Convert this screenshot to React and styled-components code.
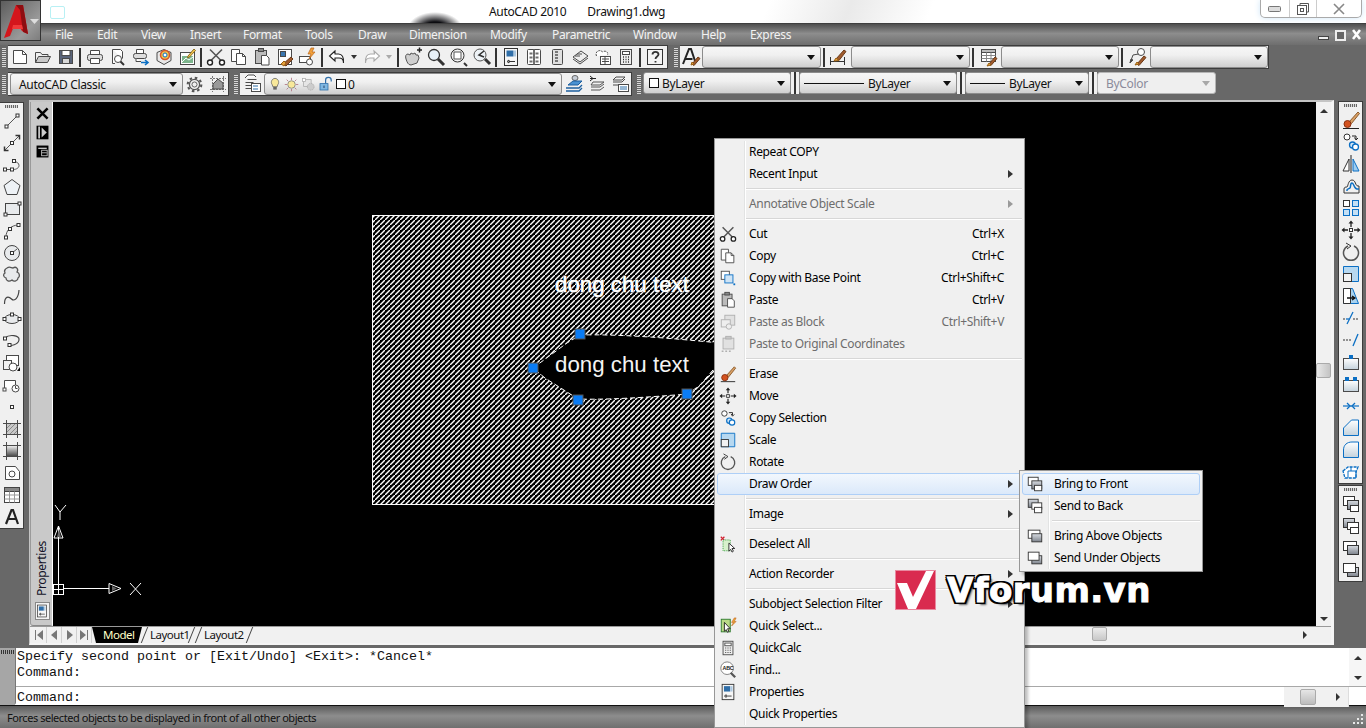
import React from "react"
import styled, { createGlobalStyle } from "styled-components"

const UI = `"Noto Sans", "Open Sans", sans-serif`

const GlobalStyle = createGlobalStyle`
  html, body {
    margin: 0;
    padding: 0;
    overflow: hidden;
    background: #686868;
  }
  * { box-sizing: border-box; }
`

const D = "#4a4a4a"
const B = "#0b6fc4"
const G = "#9a9a9a"

// all icons live in a 20x20 box
const icons = {
  new: <><path d="M3.5 3.5h9l4 4v9h-13z" fill="#fff" /><path d="M12.5 3.5v4h4" /></>,
  open: <><path d="M2.5 15.5v-10h5l1.5 2h6v2" fill="#eee" /><path d="M2.5 15.5l3-6h12l-3 6z" fill="#c9c9c9" /></>,
  save: <><rect x="3.5" y="3.5" width="13" height="13" fill="#59647a" /><rect x="6" y="3.5" width="8" height="5" fill="#fff" /><rect x="6.5" y="11.5" width="7" height="5" fill="#d8d8d8" /></>,
  print: <><path d="M5.5 7V3.5h9V7" fill="#fff" /><rect x="2.5" y="7.5" width="15" height="6" rx="2" fill="#ddd" /><path d="M5.5 11.5h9v5h-9z" fill="#fff" /></>,
  preview: <><path d="M4.5 2.5h8l2 2v7M7 16.5H4.5v-14" fill="#fff" /><circle cx="10" cy="12" r="3.5" fill="#fff" /><path d="M12.5 14.5l3.5 3.5" strokeWidth="2" stroke="#333" /></>,
  plot: <><path d="M5.5 6V2.5h7V6" fill="#fff" /><rect x="2.5" y="6.5" width="13" height="5" rx="2" fill="#ddd" /><path d="M5 11.5v3h5" fill="#fff" /><path d="M10 15.5h6M14 13l3 2.5-3 2.5" stroke={B} strokeWidth="1.6" /></>,
  view3d: <><path d="M10 2.5l7 3v8l-7 4-7-4v-8z" fill="#e8e8e8" /><circle cx="11" cy="8" r="4.5" fill="#f3c24a" stroke="#d4552a" strokeWidth="1.5" /><circle cx="11" cy="8" r="2" fill="#fff" stroke={B} /></>,
  publish: <><rect x="3.5" y="5.5" width="14" height="12" fill="#fff" /><rect x="5" y="9" width="11" height="7" fill="#7db58d" stroke="none" /><path d="M5 15l4-4 3 2 4-3" stroke="#fff" /><path d="M11 9l6-7 1.5 1.5-6 6.5-2 1z" fill="#f5c550" stroke="#8a6d1f" /></>,
  cut: <><path d="M4 2.5l11 11M16 2.5l-11 11" stroke="#555" strokeWidth="1.6" /><circle cx="4" cy="15.5" r="2.5" fill="#fff" stroke="#222" strokeWidth="1.4" /><circle cx="16" cy="15.5" r="2.5" fill="#fff" stroke="#222" strokeWidth="1.4" /></>,
  copy: <><path d="M2.5 2.5h8v12h-8z" fill="#fff" /><path d="M7.5 6.5h6l3 3v8h-9z" fill="#fff" /><path d="M13.5 6.5v3h3" /></>,
  copyBase: <><rect x="2.5" y="2.5" width="9" height="9" fill="#fff" /><rect x="6.5" y="6.5" width="9" height="9" fill="#cfe4f5" stroke={B} /><rect x="16" y="16" width="2" height="2" fill={B} stroke="none" /></>,
  paste: <><rect x="3.5" y="3.5" width="11" height="13" fill="#bbb" /><rect x="6.5" y="1.5" width="5" height="3" fill="#888" /><path d="M9.5 8.5h5l2.5 2.5v7h-7.5z" fill="#fff" /></>,
  pasteBlock: <g stroke={G}><rect x="6.5" y="2.5" width="11" height="11" fill="#ddd" /><rect x="2.5" y="7.5" width="10" height="8" fill="#eee" /><circle cx="11" cy="15" r="3" fill="#eee" /></g>,
  pasteOrig: <g stroke={G}><rect x="4.5" y="3.5" width="12" height="12" fill="#ddd" /><rect x="7.5" y="1.5" width="6" height="3" fill="#bbb" /><path d="M3 18h2M7 18h2M11 18h2" strokeWidth="1.5" /></g>,
  match: <><rect x="3.5" y="2.5" width="13" height="15" fill="#fff" /><rect x="5.5" y="4.5" width="5" height="5" fill="#3c78b0" /><path d="M8 17l8-7 2 2-7 7z" fill="#a05a2c" stroke="#6b3a18" /><path d="M6 17l3-3 2 2-2 3z" fill="#e6a23c" stroke="#9a6014" /></>,
  blockEdit: <><rect x="1.5" y="9.5" width="11" height="6" fill="#fff" /><circle cx="11.5" cy="15" r="3" fill="#fff" /><path d="M13 1l-3 6h3l-2 5 6-7h-3l2-4z" fill="#f2a13a" stroke="#b9641a" strokeWidth=".7" /></>,
  undo: <path d="M8 4L2.5 9 8 14v-3h4c3 0 4.500 2 4.500 5 .5-6-1.500-9-5-9H8z" fill="#fff" stroke="#222" strokeWidth="1.1" />,
  redo: <path d="M12 4l5.500 5-5.500 5v-3H8c-3 0-4.500 2-4.500 5-.5-6 1.500-9 5-9h4z" fill="#fff" stroke="#aaa" strokeWidth="1.1" />,
  pan: <><path d="M3 12c-1-3 0-5 2-5l2 1 1-2 2 1 2-1 1 2 2 0 1 3-2 5-6 2c-3 0-4-3-5-6z" fill="#cfcfcf" stroke="#555" /><path d="M14 3h5M16.500 .5v5" stroke="#222" strokeWidth="1.5" /></>,
  zoom: <><circle cx="8" cy="8" r="5.5" fill="#e8f1f8" stroke="#333" strokeWidth="1.3" /><path d="M12 12l6 6" stroke="#333" strokeWidth="3" /></>,
  zoomWin: <><circle cx="8.500" cy="8.500" r="6.500" fill="#f3f3f3" stroke="#333" /><rect x="5" y="5" width="7" height="7" fill="#fff" stroke="#555" /><path d="M15 16l3 3" stroke="#333" strokeWidth="2" /></>,
  zoomPrev: <><circle cx="8" cy="8" r="6" fill="#eef3f7" stroke="#555" /><path d="M13 12l5 5" stroke="#333" strokeWidth="3" /><path d="M12 4l-5 4 5 2" stroke="#333" strokeWidth="1.6" /></>,
  props: <><rect x="3.5" y="1.5" width="13" height="17" fill="#f6f6f6" stroke="#333" /><rect x="5.500" y="3.500" width="7" height="6" fill="#2f6ea8" stroke="none" /><rect x="13" y="3.500" width="2" height="6" fill="#aac7e0" stroke="none" /><path d="M8 14.500h6M6 14.500l2-1.500v3z" stroke="#333" /></>,
  design: <><rect x="3.500" y="2.500" width="13" height="15" rx="1" fill="#fff" /><path d="M10 2.500v15M5.500 6.500h3M11.500 6.500h3M5.500 10.500h3M11.500 10.500h3M11.500 14.500h3M5.500 14.500h3" strokeWidth="2" stroke="#6e6e6e" /></>,
  palette: <><rect x="5.500" y="2.500" width="10" height="15" rx="1" fill="#e0e0e0" /><path d="M8 5h3M8 8h3M8 11h3M8 14h3" strokeWidth="2" stroke="#777" /></>,
  sheet: <><path d="M3 10l8-6 7 5-8 6z" fill="#eee" /><path d="M3 12l7 5 8-6M5 9h5M7 7h5" /></>,
  markup: <><path d="M3.500 9c-2-5 4-7 6-4 3-2 6 0 5 3" fill="#fff" strokeDasharray="2 1" /><rect x="7.500" y="9.500" width="10" height="8" fill="#fff" /><path d="M9 12h7M9 14.500h7M12 9.500v8" /></>,
  calc: <><rect x="4.500" y="2.500" width="11" height="15" fill="#eee" /><rect x="6.500" y="4.500" width="7" height="3" fill="#fff" /><path d="M7 10h1M9.500 10h1M12 10h1M7 12.500h1M9.500 12.500h1M12 12.500h1M7 15h1M9.500 15h1M12 15h1" stroke="#333" strokeWidth="1.300" /></>,
  help: <><rect x="2.500" y="2.500" width="15" height="15" fill="#f4f4f4" stroke="#333" /><path d="M7.500 7.500c0-3.500 6-3.500 6 0 0 2-3 2-3 4.500M10.500 14v1.500" stroke="#333" strokeWidth="1.800" /></>,
  textStyle: <><path d="M2 17L8 2h2l4 12M4.500 12h7" stroke="#222" strokeWidth="2" /><path d="M11 17l6-7 2 1.500-6 7z" fill="#a05a2c" stroke="#6b3a18" /><path d="M10 18l1-3 2 2z" fill="#e6a23c" stroke="#9a6014" /></>,
  dimStyle: <><path d="M1.500 10v8M15.500 10v8M2 14.500h13" stroke="#333" /><path d="M7 12l8-9 2 1.500-7 9z" fill="#a05a2c" stroke="#6b3a18" /><path d="M5 14l2-3 3 2.500z" fill="#e6a23c" stroke="#9a6014" /></>,
  tableStyle: <><rect x="2.500" y="2.500" width="14" height="12" fill="#fff" /><rect x="2.500" y="2.500" width="14" height="3" fill="#bbb" /><path d="M2.500 8.500h14M2.500 11.500h14M7.500 5.500v9M12 5.500v9" stroke="#888" /><path d="M10 17l6-7 2 1.500-6 7z" fill="#a05a2c" stroke="#6b3a18" /><path d="M8 19l2-3 2 2z" fill="#e6a23c" stroke="#9a6014" /></>,
  mleaderStyle: <><circle cx="13" cy="5" r="3.500" fill="#fff" /><path d="M10.500 7L5 8l-3 8" /><path d="M2 16l1-4 2 1z" fill="#444" /><path d="M9 17l7-8 2 1.500-7 8z" fill="#a05a2c" stroke="#6b3a18" /><path d="M7 18l2-3 2 2z" fill="#e6a23c" stroke="#9a6014" /></>,
  gear: <><circle cx="10" cy="10" r="6" fill="none" stroke="#555" strokeWidth="1.500" /><circle cx="10" cy="10" r="8" fill="none" stroke="#555" strokeWidth="2.500" strokeDasharray="3 3.300" /><circle cx="10" cy="10" r="3" fill="#f0f0f0" /></>,
  workspace: <><path d="M2 4.500h16M2 15.500h16M4.500 2v16M15.500 2v16" stroke="#777" strokeDasharray="2 1" /><path d="M5 10l5-5 5 4v6H5z" fill="#999" /></>,
  layerProps: <><path d="M5.500 5.500h9M3.500 8.500h8M3.500 11.500h8M3.500 14.500h8" /><path d="M3 4l3-3h6l2 2" fill="#fff" /><rect x="9.500" y="9.500" width="9" height="8" fill="#fff" /><path d="M11 12h5M11 15h5" stroke="#2d6fa8" /></>,
  bulb: <><path d="M6 11c-3-4 0-9 4-9s7 5 4 9l-1 3H7z" fill="#f8e89a" stroke="#555" /><rect x="7.500" y="14" width="5" height="4" fill="#666" stroke="none" /></>,
  sun: <><circle cx="10" cy="10" r="5" fill="#f8e89a" stroke="#777" /><path d="M10 1v3M10 16v3M1 10h3M16 10h3M3.500 3.500l2 2M14.500 14.500l2 2M16.500 3.500l-2 2M3.500 16.500l2-2" stroke="#a67" /></>,
  freeze: <g stroke="#aaa"><rect x="3.500" y="3.500" width="10" height="9" fill="#e6e6e6" /><rect x="2" y="2" width="4" height="4" fill="#fff" /><circle cx="13" cy="13" r="4.500" fill="#ccc" strokeDasharray="2 1" /></g>,
  lock: <><rect x="2.500" y="9.500" width="10" height="8" fill="#7fb7e2" stroke="#2f6ea8" /><path d="M9.500 9V5c0-4.500 7-4.500 7 0v2" stroke="#2f6ea8" strokeWidth="1.500" /><path d="M7.500 12v3" stroke="#124" /></>,
  layerCur: <><ellipse cx="11" cy="4" rx="3" ry="2.500" fill="#c5ccd6" stroke="#666" /><path d="M4 11l5-4h9l-4 4z" fill="#4a92d2" stroke="#1d5f9e" /><path d="M2 14h13l3-3M2 17h13l3-3" stroke="#1d5f9e" strokeWidth="1.300" /></>,
  layerPrev: <><path d="M3 2l3 2.500L3 7M3 4.500h6" stroke="#222" /><path d="M6 8h11l-4 3H4zM4 13h9l4-3M4 16h9l4-3" stroke="#555" fill="none" /></>,
  layerState: <><path d="M6 3h9l-3 3H3zM3 8h9l3-3M3 11h5" /><rect x="8.500" y="10.500" width="10" height="7" fill="#fff" /><path d="M10 13h7M10 15h7" stroke="#2d6fa8" /></>,
  line: <><path d="M4.500 15.500l11-11" stroke="#555" /><rect x="3" y="14" width="3" height="3" fill="#fff" stroke="#333" /><rect x="14" y="3" width="3" height="3" fill="#fff" stroke="#333" /></>,
  xline: <><path d="M3 17L17 3" stroke="#555" /><path d="M2.500 13.500v4h4M13.500 2.500h4v4" stroke="#333" strokeWidth="1.500" /><rect x="8.500" y="8.500" width="3" height="3" fill="#fff" stroke="#333" /></>,
  pline: <><path d="M3 14.500h8c4 0 6-2 6-4s-2-4-5-4" stroke="#555" /><rect x="1.500" y="13" width="3" height="3" fill="#fff" stroke="#333" /><rect x="8.500" y="13" width="3" height="3" fill="#fff" stroke="#333" /><rect x="10.500" y="4.500" width="3" height="3" fill="#fff" stroke="#333" /></>,
  polygon: <path d="M10 2.500l8 6-3 9H5l-3-9z" fill="#eef2f6" stroke="#444" />,
  rect: <><rect x="3.500" y="4.500" width="14" height="11" fill="#e8eaec" stroke="#444" /><rect x="2" y="14" width="3" height="3" fill="#fff" stroke="#333" /><rect x="16" y="3" width="3" height="3" fill="#fff" stroke="#333" /></>,
  arc: <><path d="M4 16C4 9 9 4.500 16 4" stroke="#555" /><rect x="2.500" y="15" width="3" height="3" fill="#fff" stroke="#333" /><rect x="6.500" y="6.500" width="3" height="3" fill="#fff" stroke="#333" /><rect x="15" y="2.500" width="3" height="3" fill="#fff" stroke="#333" /></>,
  circle: <><circle cx="10" cy="10" r="7.500" fill="#e8eaec" stroke="#444" /><path d="M10 10l5-4" stroke="#555" /><rect x="8.500" y="8.500" width="3" height="3" fill="#fff" stroke="#333" /></>,
  cloud: <path d="M5 3c3-2 4 0 6 0 3-2 6 1 4 4 3 1 3 5 1 6 0 3-4 4-6 2-3 2-6 1-6-2-3-1-3-4-1-5-1-2 0-4 2-5z" fill="#e8eaec" stroke="#555" strokeWidth="1.300" />,
  spline: <path d="M2.500 17c0-8 4-8 7-5s7-1 7.500-9" stroke="#444" strokeWidth="1.200" />,
  ellipse: <><ellipse cx="10" cy="10" rx="7.500" ry="4.500" fill="#e8eaec" stroke="#444" /><rect x="8.500" y="4" width="3" height="3" fill="#fff" stroke="#333" /><rect x="1" y="8.500" width="3" height="3" fill="#fff" stroke="#333" /><rect x="16" y="8.500" width="3" height="3" fill="#fff" stroke="#333" /></>,
  ellipArc: <><path d="M3 7c4-4 15-3 14 2s-8 6-11 5" stroke="#444" strokeWidth="1.200" /><rect x="1.500" y="6" width="3" height="3" fill="#fff" stroke="#333" /><rect x="6" y="12.500" width="3" height="3" fill="#fff" stroke="#333" /></>,
  insert: <><rect x="4.500" y="2.500" width="12" height="10" fill="#fff" /><rect x="1.500" y="7.500" width="8" height="9" fill="#f2f2f2" /><circle cx="11" cy="14" r="4" fill="#fff" /><path d="M18 14l-3 4h3z" fill="#111" stroke="none" /></>,
  block: <><path d="M2.500 14.500v-9h11v7" fill="#fff" /><circle cx="13.500" cy="13.500" r="3.500" fill="#fff" /><rect x="1" y="13" width="3" height="3" fill="#fff" /><path d="M13.500 11v2.500h2" /></>,
  point: <rect x="8.500" y="8.500" width="3" height="3" fill="#fff" stroke="#333" />,
  hatch: <><path d="M1 4.500h18M1 15.500h18M4.500 1v18M15.500 1v18" /><rect x="4.500" y="4.500" width="11" height="11" fill="#c8c8c8" /><path d="M5 9l4-4M5 13l8-8M8 15l7-7M12 15l3-3" stroke="#888" /></>,
  gradient: <><path d="M1 4.500h18M1 15.500h18M4.500 1v18M15.500 1v18" /><rect x="4.500" y="4.500" width="11" height="11" fill="url(#grad)" /></>,
  region: <><path d="M3.500 3.500h10l4 5v8h-14z" fill="#fff" /><circle cx="10" cy="11" r="3" fill="#fff" /></>,
  table: <><rect x="2.500" y="2.500" width="15" height="15" fill="#fff" stroke="#444" /><rect x="2.500" y="2.500" width="15" height="4" fill="#888" stroke="#444" /><path d="M2.500 10h15M2.500 14h15M7.500 6.500v11M12.500 6.500v11" stroke="#999" /></>,
  close: <path d="M4 4l12 12M16 4L4 16" stroke="#000" strokeWidth="3" />,
  autoHide: <><rect x="3" y="2" width="14" height="16" fill="#000" stroke="none" /><rect x="5" y="3" width="2" height="14" fill="#ccc" stroke="none" /><path d="M9 4l6 6-6 6z" fill="#ccc" stroke="none" /></>,
  palMenu: <><rect x="3" y="3" width="14" height="14" fill="#000" stroke="none" /><rect x="5" y="5.500" width="10" height="1.500" fill="#ccc" stroke="none" /><rect x="9" y="8.500" width="6.500" height="6.500" fill="none" stroke="#ccc" /><path d="M9 11.500h6" stroke="#ccc" /></>,
  erase: <><path d="M2 18.500h16" stroke="#222" /><path d="M8 12L17 2l1.500 1.500-8 10z" fill="#d9a066" stroke="#8a5a2b" /><circle cx="6.500" cy="14" r="3.500" fill="#d2521f" stroke="#8a2f0e" /></>,
  copySel: <><circle cx="6" cy="5" r="3" fill="#fff" stroke="#333" /><path d="M11 4h4v3M13.500 5.500L15 8l2-2" stroke="#222" /><circle cx="11.500" cy="13" r="3" fill="#cfe4f5" stroke={B} strokeWidth="1.300" /><circle cx="14.500" cy="15" r="3" fill="#fff" stroke={B} strokeWidth="1.300" /></>,
  mirror: <><path d="M10 1v18" stroke="#222" /><path d="M8 5l-6 12h6z" fill="#fff" stroke="#333" /><path d="M12 5l6 12h-6z" fill="#9fcdf0" stroke={B} /></>,
  offset: <><path d="M3 17v-4c0-2 2-2 3-2s1-7 5-7 3 6 6 6h1v7z" fill="none" stroke="#333" /><path d="M6 15v-1c0-1 2-1 3-2s0-5 2-5 2 6 5 6h2" stroke={B} strokeWidth="1.500" /></>,
  array: <><rect x="2.500" y="2.500" width="6" height="6" fill="#fff" stroke="#333" /><rect x="11.500" y="2.500" width="6" height="6" fill="#c5e0f5" stroke={B} /><rect x="2.500" y="11.500" width="6" height="6" fill="#c5e0f5" stroke={B} /><rect x="11.500" y="11.500" width="6" height="6" fill="#c5e0f5" stroke={B} /></>,
  move: <><rect x="8.500" y="8.500" width="3" height="3" fill="#fff" stroke="#333" /><path d="M10 7V3M10 13v4M7 10H3M13 10h4" stroke="#222" strokeWidth="1.300" /><path d="M10 .5l2.500 3h-5zM10 19.500l2.500-3h-5zM.5 10l3-2.500v5zM19.500 10l-3-2.500v5z" fill="#222" stroke="none" /></>,
  rotate: <><path d="M7 4a7.500 7.500 0 1 0 6 0" stroke="#555" strokeWidth="1.500" /><path d="M5 1l5 3-4 3" stroke="#333" /></>,
  scale: <><path d="M2.500 2.500h15v15h-15z" fill="#b7d8f0" stroke={B} /><rect x="2.500" y="9.500" width="8" height="8" fill="#f2f2f2" stroke="#333" /></>,
  stretch: <><path d="M2.500 2.500h9l6 15h-15z" fill="#a8d2ef" stroke={B} /><path d="M2.500 2.500h7v15h-7z" fill="#fff" stroke="#333" /><path d="M6 12h7M11 10l3 2-3 2" stroke="#111" strokeWidth="1.300" /></>,
  trim: <><path d="M2 11h3M12 11h6" stroke="#333" strokeDasharray="2 1" /><path d="M6 16L12 4" stroke={B} strokeWidth="1.300" /><path d="M5 11h3" stroke={B} strokeWidth="1.300" /></>,
  extend: <><path d="M2 10h8" stroke="#333" strokeDasharray="2 1" /><path d="M12 16L17 4" stroke={B} strokeWidth="1.300" /></>,
  breakPt: <><rect x="2.500" y="6.500" width="15" height="11" fill="url(#grad2)" /><path d="M2.500 6.500h15M2.500 6.500v11" /><rect x="8" y="3" width="4" height="4" fill={B} stroke="none" /></>,
  breakIco: <><rect x="2.500" y="6.500" width="15" height="11" fill="url(#grad2)" /><rect x="4" y="3" width="4" height="4" fill={B} stroke="none" /><rect x="12" y="3" width="4" height="4" fill={B} stroke="none" /></>,
  join: <><path d="M2 10h16" stroke={B} strokeWidth="1.200" /><path d="M6 7l3 3-3 3M14 7l-3 3 3 3" stroke={B} strokeWidth="1.300" /></>,
  chamfer: <path d="M2.500 17.500V10l8-8h7v15.500z" fill="url(#grad2)" stroke={B} />,
  fillet: <path d="M2.500 17.500V10C2.500 5 6 2 11 2h6.500v15.500z" fill="url(#grad2)" stroke={B} />,
  explode: <><path d="M2 9l5-4h10l-2 5v6H4z" fill="#fff" stroke={B} strokeDasharray="3 1" strokeWidth="1.300" /><path d="M7 9h8v7M7 9v7M10 5v4" stroke={B} /></>,
  front: <><rect x="2.500" y="2.500" width="11" height="9" fill="#fff" stroke="#333" /><rect x="6.500" y="6.500" width="11" height="9" fill="url(#grad3)" stroke="#333" /><rect x="9.500" y="11.500" width="8" height="6" fill="#fff" stroke="#333" /></>,
  back: <><rect x="2.500" y="2.500" width="11" height="9" fill="url(#grad3)" stroke="#333" /><rect x="6.500" y="6.500" width="11" height="7" fill="#fff" stroke="#333" /><rect x="9.500" y="11.500" width="8" height="6" fill="#fff" stroke="#333" /></>,
  above: <><rect x="2.500" y="3.500" width="13" height="9" fill="#fff" stroke="#333" /><rect x="6.500" y="7.500" width="11" height="9" fill="url(#grad3)" stroke="#333" /></>,
  under: <><rect x="6.500" y="7.500" width="11" height="9" fill="url(#grad3)" stroke="#333" /><rect x="2.500" y="3.500" width="12" height="9" fill="#fff" stroke="#333" /></>,
  deselect: <><path d="M2 2l4 4M6 2L2 6" stroke="#d21f2f" strokeWidth="1.400" /><rect x="4.500" y="5.500" width="8" height="12" fill="#d8f0cc" stroke="#2e9a34" strokeDasharray="1 1" /><path d="M11 9v9l2-2 1.500 3 1.500-1-1.500-3h3z" fill="#fff" stroke="#222" /></>,
  qselect: <><rect x="2.500" y="2.500" width="10" height="14" fill="#b9d986" stroke="#2c7a2c" /><path d="M6 6v10l2-2 1.500 3 1.500-1-1.500-3h3z" fill="#fff" stroke="#222" /><path d="M17 1l-3 5h2l-2 4 5-5h-2l2-4z" fill="#f2a13a" stroke="#b9641a" strokeWidth=".6" /></>,
  find: <><circle cx="9" cy="8" r="7" fill="#fff" stroke="#777" /><text x="4" y="10.500" fontFamily="Liberation Sans" fontSize="6" fontWeight="700" fill="#222" stroke="none">ABC</text><path d="M13 13l5 5" stroke="#555" strokeWidth="2.500" /></>,
}

const IconSvg = styled.svg`
  display: block;
  flex: none;
  width: ${p => p.$size || 20}px;
  height: ${p => p.$size || 20}px;
  fill: none;
  stroke: ${D};
  stroke-width: 1;
`

function Icon({ name, size }) {
  return (
    <IconSvg viewBox="0 0 20 20" $size={size}>
      {icons[name]}
    </IconSvg>
  )
}

const App_ = styled.div`
  position: relative;
  width: 1366px;
  height: 728px;
  overflow: hidden;
  background: #686868;
  font-family: ${UI};
  font-size: 12px;
  letter-spacing: -0.33px;
  color: #000;
`

/* title bar */

const TitleBar = styled.div`
  display: flex;
  align-items: flex-start;
  height: 23px;
  padding-left: 50px;
  background:
    radial-gradient(ellipse 28px 18px at 435px 30px, #0c0c10 45%, rgba(20,20,30,0) 100%),
    linear-gradient(112deg, rgba(255,255,255,0) 56%, rgba(225,225,225,.7) 62%, rgba(255,255,255,0) 68%),
    #fff;
`
const QuickDoc = styled.div`
  width: 15px;
  height: 13px;
  margin-top: 6px;
  border: 1px solid #b8f0f4;
  border-radius: 2px;
`
const TitleText = styled.div`
  display: flex;
  gap: 21px;
  margin-left: 424px;
  margin-top: 3px;
  line-height: 18px;
  font-size: 12px;
  color: #111;
`
const WindowButtons = styled.div`
  display: flex;
  margin-left: auto;
  margin-right: 4px;
  width: 102px;
  height: 18px;
  border: 1px solid #aaa;
  border-top: 0;
  border-radius: 0 0 5px 5px;
  background: #fff;
  box-shadow: 0 0 6px #cfe6f8;
`
const WinBtn = styled.div`
  display: flex;
  align-items: center;
  justify-content: center;
  width: ${p => p.$w}px;
  border-left: ${p => (p.$first ? "0" : "1px solid #ccc")};
`

const AppButton = styled.div`
  position: absolute;
  left: 0;
  top: 0;
  width: 41px;
  height: 41px;
  border: 1px solid #333;
  background: linear-gradient(135deg, #5c5c5c, #9a9a9a 70%, #7d7d7d);
  display: flex;
`

/* menu bar */

const MenuBar = styled.div`
  display: flex;
  align-items: center;
  height: 22px;
  padding-left: 55px;
  border-top: 1px solid #3e3e3e;
  background: linear-gradient(#4e4e4e, #8d8d8d 45%, #6e6e6e);
`
const MenuLabel = styled.span`
  width: ${p => p.$w}px;
  flex: none;
  color: #f2f2f2;
  font-size: 12px;
`
const MdiButtons = styled.div`
  display: flex;
  align-items: center;
  gap: 6px;
  margin-left: auto;
  margin-right: 5px;
`

/* toolbars */

const ToolRow = styled.div`
  display: flex;
  height: 24px;
  margin-top: ${p => p.$top || 0}px;
`
const Toolbar = styled.div`
  display: flex;
  align-items: center;
  flex: none;
  width: ${p => p.$w}px;
  height: 24px;
  padding-left: ${p => p.$pad || 0}px;
  background: #f0f0f0;
  border: 1px solid #3c3c3c;
  border-left: 0;
`
const Grip = styled.div`
  flex: none;
  align-self: stretch;
  width: 8px;
  background-color: #666;
  background-image: linear-gradient(#d8d8d8 1px, transparent 1px), linear-gradient(90deg, #666 1px, transparent 1px);
  background-size: 2px 2px;
  background-position: 2px 1px;
  background-clip: content-box;
  padding: 2px 2px;
  margin-left: ${p => p.$left || 0}px;
`
const ToolBtn = styled.div`
  display: flex;
  align-items: center;
  justify-content: center;
  flex: none;
  width: ${p => p.$w || 23}px;
  height: 22px;
`
const ToolSep = styled.div`
  flex: none;
  width: 2px;
  height: 19px;
  margin: 0 2px;
  background: #333;
`
const DropTri = styled.div`
  flex: none;
  width: 0;
  height: 0;
  margin: 0 auto;
  border: 3px solid transparent;
  border-top: 4px solid ${p => (p.$dim ? "#aaa" : "#333")};
  border-bottom: 0;
`
const Combo = styled.div`
  display: flex;
  align-items: center;
  flex: none;
  gap: ${p => p.$gap || 0}px;
  width: ${p => p.$w}px;
  height: 22px;
  padding: 0 5px 0 ${p => p.$pad || 8}px;
  border: 1px solid ${p => (p.$off ? "#b5b5b5" : "#8c8c8c")};
  border-radius: 3px;
  color: ${p => (p.$off ? "#8b8b9b" : "#111")};
  background: ${p => (p.$off ? "#efefef" : "linear-gradient(#f6f6f6, #f0f0f0 40%, #cfcfcf)")};
`
const ComboArrow = styled.div`
  flex: none;
  width: 0;
  height: 0;
  margin-left: auto;
  border: 4px solid transparent;
  border-top: 5px solid ${p => (p.$off ? "#a8a8a8" : "#111")};
  border-bottom: 0;
`
const DoubleSep = styled.div`
  flex: none;
  width: 8px;
  height: 22px;
  background: #f0f0f0;
  border-left: 2px solid #f0f0f0;
  border-right: 2px solid #f0f0f0;
  position: relative;
  &::after {
    content: "";
    display: block;
    width: 2px;
    height: 100%;
    margin-left: 1px;
    background: #333;
  }
`
const ColorSwatch = styled.div`
  flex: none;
  width: ${p => p.$s || 10}px;
  height: ${p => p.$s || 10}px;
  border: 1px solid #111;
  background: #fff;
`
const LineSample = styled.div`
  flex: none;
  width: ${p => p.$w}px;
  height: 1px;
  background: #111;
`

/* workspace */

const Workspace = styled.div`
  display: flex;
  height: 545px;
  margin-top: 4px;
`
const LeftDock = styled.div`
  flex: none;
  width: 29px;
  padding-top: 2px;
`
const VToolbar = styled.div`
  width: ${p => p.$w || 24}px;
  background: #f0f0f0;
  border: 1px solid #3c3c3c;
  border-left: ${p => (p.$open ? "0" : "1px solid #3c3c3c")};
  margin-bottom: 1px;
`
const VGrip = styled.div`
  height: 7px;
  background-color: #666;
  background-image: linear-gradient(90deg, #d8d8d8 1px, transparent 1px);
  background-size: 2px 2px;
  background-clip: content-box;
  padding: 2px 5px;
`
const VBtn = styled.div`
  display: flex;
  align-items: center;
  justify-content: center;
  height: 22px;
`
const RightDock = styled.div`
  flex: none;
  width: 32px;
  padding: 1px 0 0 4px;
`
const Frame = styled.div`
  flex: none;
  display: flex;
  flex-direction: column;
  width: 1305px;
  border-top: 2px solid #c4c4c4;
  border-left: 1px solid #c4c4c4;
  border-right: 3px solid #f5f5f5;
  border-bottom: 2px solid #f5f5f5;
  background: #f0f0f0;
`
const FrameTop = styled.div`
  display: flex;
  flex: 1;
  min-height: 0;
`
const PaletteStrip = styled.div`
  display: flex;
  flex-direction: column;
  align-items: center;
  flex: none;
  width: 23px;
  padding: 3px 0 3px;
  background: #c9c9c9;
  border-left: 1px solid #9a9a9a;
  border-bottom: 1px solid #8a8a8a;
  border-radius: 0 0 3px 3px;
  position: relative;
  &::after {
    content: "";
    position: absolute;
    inset: 0 0 0 auto;
    width: 1px;
    background: #fff;
  }
`
const PaletteIcons = styled.div`
  display: flex;
  flex-direction: column;
  gap: 2px;
`
const PaletteLabel = styled.div`
  writing-mode: vertical-rl;
  transform: rotate(180deg);
  margin-top: auto;
  margin-bottom: 6px;
  font-size: 12px;
  line-height: 16px;
  color: #141428;
`
const PaletteBtn = styled.div`
  width: 15px;
  height: 18px;
  margin-bottom: 2px;
  display: flex;
  align-items: center;
  justify-content: center;
  background: #f4f4f4;
  border: 1px solid #888;
`
const Canvas = styled.div`
  position: relative;
  flex: none;
  width: 1263px;
  background: #000;
  overflow: hidden;
`
const DrawingSvg = styled.svg`
  display: block;
  width: 1263px;
  height: 524px;
  letter-spacing: 0;
`
const VScroll = styled.div`
  display: flex;
  flex-direction: column;
  align-items: center;
  flex: none;
  width: 15px;
  padding: 7px 0 5px;
  background: #f1f1f1;
`
const ArrowUp = styled.div`
  flex: none;
  width: 0;
  height: 0;
  border: 4px solid transparent;
  border-bottom: 4px solid #333;
  border-top: 0;
`
const ArrowDown = styled.div`
  flex: none;
  width: 0;
  height: 0;
  border: 4px solid transparent;
  border-top: 4px solid #333;
  border-bottom: 0;
  margin-top: ${p => (p.$auto ? "auto" : "0")};
`
const ArrowRight = styled.div`
  flex: none;
  width: 0;
  height: 0;
  border: 4px solid transparent;
  border-left: 4px solid #333;
  border-right: 0;
`
const VThumb = styled.div`
  width: 15px;
  height: 15px;
  margin-top: 250px;
  margin-left: 0;
  background: linear-gradient(90deg, #e8e8e8, #c4c4c4);
  border: 1px solid #aaa;
  border-radius: 2px;
`
const TabRow = styled.div`
  display: flex;
  align-items: stretch;
  flex: none;
  height: 17px;
  background: #f1f1f1;
  border-top: 1px solid #999;
`
const NavButtons = styled.div`
  display: flex;
  flex: none;
  width: 61px;
  margin-left: 1px;
`
const NavBtn = styled.div`
  display: flex;
  align-items: center;
  justify-content: center;
  flex: ${p => p.$w || 1};
  border-right: 1px solid #d0d0d0;
`
const TabShape = styled.div`
  position: relative;
  flex: none;
  width: ${p => p.$w}px;
  margin-right: ${p => p.$gap || 0}px;
  padding-left: ${p => p.$pad}px;
  font-size: 11.5px;
  letter-spacing: -0.5px;
  line-height: 15px;
  color: ${p => (p.$on ? "#ffffc8" : "#111")};
  background: ${p => (p.$on ? "#000" : "transparent")};
  clip-path: ${p => (p.$on ? "polygon(0 0, 100% 0, 92% 100%, 8% 100%)" : "none")};
  &::before, &::after {
    content: "";
    display: ${p => (p.$on ? "none" : "block")};
    position: absolute;
    top: 0;
    bottom: 0;
    width: 1px;
    background: #444;
    transform: skewX(-22deg);
  }
  &::before { left: 1px; }
  &::after { right: 5px; }
`
const HThumb = styled.div`
  position: absolute;
  left: 1092px;
  top: 627px;
  width: 15px;
  height: 14px;
  background: linear-gradient(#ececec, #c8c8c8);
  border: 1px solid #aaa;
  border-radius: 2px;
`
const TabEndArrow = styled.div`
  display: flex;
  align-items: center;
  margin-left: auto;
  margin-right: 24px;
`

/* command window */

const CommandWindow = styled.div`
  display: flex;
  height: 58px;
  margin-top: 3px;
  background: #fff;
  border-bottom: 1px solid #111;
`
const CmdGrip = styled.div`
  flex: none;
  width: 16px;
  background: #a6a6a6;
  border-right: 1px solid #777;
  border-radius: 0 0 3px 0;
  padding: 2px 1px;
`
const CmdGripDots = styled.div`
  height: 4px;
  background-image: linear-gradient(90deg, #333 1px, transparent 1px);
  background-size: 2px 2px;
`
const CmdBody = styled.div`
  flex: 1;
  display: flex;
  flex-direction: column;
  font-family: "Liberation Mono", monospace;
  font-size: 13.33px;
  line-height: 16px;
  letter-spacing: 0;
  color: #111;
`
const CmdOutput = styled.div`
  display: flex;
  flex: none;
  height: 39px;
  border-bottom: 1px solid #a8a8a8;
`
const CmdLines = styled.div`
  flex: 1;
  padding: 1px 0 0 1px;
  white-space: pre;
`
const CmdScroll = styled.div`
  display: flex;
  flex-direction: column;
  align-items: center;
  flex: none;
  width: 17px;
  padding: 8px 0 6px;
  background: #f6f6f6;
`
const CmdInput = styled.div`
  display: flex;
  flex: 1;
  align-items: stretch;
  padding-left: 1px;
  line-height: 18px;
`
const CmdPrompt = styled.span`
  padding-top: 2px;
`
const CmdHScroll = styled.div`
  display: flex;
  align-items: center;
  margin-left: auto;
  width: 65px;
  background: #f1f1f1;
  border-right: 1px solid #ddd;
  margin-right: 17px;
`
const CmdThumb = styled.div`
  width: 16px;
  height: 16px;
  margin-left: 16px;
  margin-right: 20px;
  background: linear-gradient(#e6e6e6, #bdbdbd);
  border: 1px solid #aaa;
  border-radius: 2px;
`

/* status bar */

const StatusBar = styled.div`
  display: flex;
  align-items: center;
  height: 22px;
  padding-left: 7px;
  background: linear-gradient(#5b5b5b, #8d8d8d 45%, #6f6f6f);
  font-size: 11px;
  letter-spacing: -0.45px;
  color: #111;
`
const ResizeDots = styled.svg`
  margin-left: auto;
  margin-right: 1px;
  margin-top: 4px;
`

/* context menu */

const MenuPanel = styled.div`
  position: absolute;
  left: ${p => p.$x}px;
  top: ${p => p.$y}px;
  width: ${p => p.$w}px;
  padding: 2px;
  background: #f0f0f0;
  border: 1px solid #979797;
  box-shadow: 3px 3px 3px rgba(0, 0, 0, 0.25);
  &::before {
    content: "";
    position: absolute;
    top: 2px;
    bottom: 2px;
    left: ${p => p.$rail}px;
    width: 2px;
    background: linear-gradient(90deg, #e2e3e3 1px, #fff 1px);
  }
`
const MenuRow = styled.div`
  position: relative;
  display: flex;
  align-items: center;
  height: 22px;
  color: ${p => (p.$off ? "#6d6d6d" : "#000")};
  border-radius: 3px;
  border: 1px solid ${p => (p.$on ? "#aecff7" : "transparent")};
  background: ${p => (p.$on ? "linear-gradient(#f2f7fd, #dbe9fa)" : "transparent")};
`
const MenuIcon = styled.div`
  display: flex;
  align-items: center;
  justify-content: center;
  flex: none;
  width: ${p => p.$w}px;
  opacity: ${p => (p.$off ? 0.75 : 1)};
`
const MenuText = styled.span`
  flex: 1;
  margin-top: -2px;
  padding-left: ${p => p.$pad}px;
  white-space: nowrap;
`
const MenuShortcut = styled.span`
  margin-top: -2px;
  margin-right: 17px;
  white-space: nowrap;
`
const SubArrow = styled.div`
  position: absolute;
  right: 8px;
  top: 6px;
  width: 0;
  height: 0;
  border: 4px solid transparent;
  border-left: 5px solid ${p => (p.$off ? "#9a9a9a" : "#333")};
  border-right: 0;
`
const MenuSep = styled.div`
  height: 8px;
  margin-left: ${p => p.$left}px;
  padding-top: 3px;
  &::after {
    content: "";
    display: block;
    height: 2px;
    background: linear-gradient(#d7d7d7 1px, #fff 1px);
  }
`

/* watermark */

const Watermark = styled.div`
  position: absolute;
  left: 895px;
  top: 570px;
  display: flex;
  align-items: center;
  gap: 11px;
`
const WatermarkText = styled.div`
  font-family: "DejaVu Sans", sans-serif;
  font-weight: 700;
  font-size: 34px;
  line-height: 40px;
  letter-spacing: .4px;
  color: #fff;
  -webkit-text-stroke: 1px #fff;
  text-shadow: -2px 0 0 #000, 2px 0 0 #000, 0 -2px 0 #000, 0 2px 0 #000, 2px 2px 0 #000, -2px -2px 0 #000, 2px -2px 0 #000, -2px 2px 0 #000, 3px 3px 2px rgba(0, 0, 0, .6);
`

const topGroups = [
  ["new", "open", "save"],
  ["print", "preview", "plot", "view3d", "publish"],
  ["cut", "copy", "paste", "match", "blockEdit"],
  ["undo", "dd", "redo", "ddOff"],
  ["pan", "zoom", "zoomWin", "zoomPrev"],
  ["props", "design", "palette", "sheet", "markup", "calc"],
  ["help"],
]

const menuLabels = [
  ["File", 42], ["Edit", 44], ["View", 49], ["Insert", 53], ["Format", 62], ["Tools", 53], ["Draw", 51],
  ["Dimension", 81], ["Modify", 62], ["Parametric", 81], ["Window", 68], ["Help", 49], ["Express", 60],
]

const leftTools = ["line", "xline", "pline", "polygon", "rect", "arc", "circle", "cloud", "spline", "ellipse", "ellipArc", "insert", "block", "point", "hatch", "gradient", "region", "table"]
const rightTools = ["erase", "copySel", "mirror", "offset", "array", "move", "rotate", "scale", "stretch", "trim", "extend", "breakPt", "breakIco", "join", "chamfer", "fillet", "explode"]
const orderTools = ["front", "back", "above", "under"]

const menuItems = [
  { label: "Repeat COPY" },
  { label: "Recent Input", sub: true },
  { sep: true },
  { label: "Annotative Object Scale", sub: true, off: true },
  { sep: true },
  { label: "Cut", icon: "cut", keys: "Ctrl+X" },
  { label: "Copy", icon: "copy", keys: "Ctrl+C" },
  { label: "Copy with Base Point", icon: "copyBase", keys: "Ctrl+Shift+C" },
  { label: "Paste", icon: "paste", keys: "Ctrl+V" },
  { label: "Paste as Block", icon: "pasteBlock", keys: "Ctrl+Shift+V", off: true },
  { label: "Paste to Original Coordinates", icon: "pasteOrig", off: true },
  { sep: true },
  { label: "Erase", icon: "erase" },
  { label: "Move", icon: "move" },
  { label: "Copy Selection", icon: "copySel" },
  { label: "Scale", icon: "scale" },
  { label: "Rotate", icon: "rotate" },
  { label: "Draw Order", sub: true, on: true },
  { sep: true },
  { label: "Image", sub: true },
  { sep: true },
  { label: "Deselect All", icon: "deselect" },
  { sep: true },
  { label: "Action Recorder", sub: true },
  { sep: true },
  { label: "Subobject Selection Filter", sub: true },
  { label: "Quick Select...", icon: "qselect" },
  { label: "QuickCalc", icon: "calc" },
  { label: "Find...", icon: "find" },
  { label: "Properties", icon: "props" },
  { label: "Quick Properties" },
]

const subItems = [
  { label: "Bring to Front", icon: "front", on: true },
  { label: "Send to Back", icon: "back" },
  { sep: true },
  { label: "Bring Above Objects", icon: "above" },
  { label: "Send Under Objects", icon: "under" },
]

function PopupMenu({ x, y, w, rail, items, iconWidth, pad, sepLeft }) {
  return (
    <MenuPanel $x={x} $y={y} $w={w} $rail={rail}>
      {items.map((item, i) =>
        item.sep ? (
          <MenuSep key={i} $left={sepLeft} />
        ) : (
          <MenuRow key={i} $off={item.off} $on={item.on}>
            <MenuIcon $w={iconWidth} $off={item.off}>
              {item.icon && <Icon name={item.icon} size={18} />}
            </MenuIcon>
            <MenuText $pad={pad}>{item.label}</MenuText>
            {item.keys && <MenuShortcut>{item.keys}</MenuShortcut>}
            {item.sub && <SubArrow $off={item.off} />}
          </MenuRow>
        )
      )}
    </MenuPanel>
  )
}

function Drawing() {
  const holePath = "M533 368 L567 343 L580 335 C620 334 670 338 730 344 L730 350 L713 370 L700 385 L688 394 C650 397 610 400 578 399 L567 392 L545 378 Z"
  return (
    <DrawingSvg viewBox="53 102 1263 524">
      <defs>
        <pattern id="hatch" width="5" height="5" patternUnits="userSpaceOnUse">
          <path d="M-1 6L6 -1" stroke="#fff" strokeWidth="1.400" />
        </pattern>
      </defs>
      <rect x="372.500" y="215.500" width="361" height="289" fill="url(#hatch)" stroke="#fff" />
      <text x="555" y="292" fill="#fff" fontFamily="Liberation Sans" fontSize="22.3" fontWeight="400" stroke="#000" strokeWidth="1" paintOrder="stroke">dong chu text</text>
      <text x="555" y="292" fill="#fff" fontFamily="Liberation Sans" fontSize="22.3" stroke="#fff" strokeWidth=".4">dong chu text</text>
      <path d={holePath} fill="#000" stroke="#fff" strokeDasharray="5 3" />
      <text x="555" y="372" fill="#f4f4f4" fontFamily="Liberation Sans" fontSize="22.3">dong chu text</text>
      {[[580, 334], [533, 368], [578, 400], [687, 394]].map(([cx, cy]) => (
        <rect key={cx} x={cx - 5} y={cy - 5} width="10" height="10" fill="#0a7cf5" stroke="#555" />
      ))}
      <g fill="none" stroke="#fff">
        <path d="M55 505l5 7M66 505l-6 7v8" />
        <path d="M58.500 526v58M64 588.500h45" />
        <path d="M58.500 526l-4.500 12h9z" />
        <path d="M59 529l-2 8h4z" fill="#666" stroke="none" />
        <rect x="53.500" y="584.500" width="10" height="10" />
        <path d="M58.500 584.500v10M53.500 589.500h10" />
        <path d="M109 583.500l12 5-12 5z" />
        <path d="M112 586l5 2.500-5 2.500z" fill="#666" stroke="none" />
        <path d="M130 583l11 12M141 583l-11 12" />
      </g>
    </DrawingSvg>
  )
}

function Logo() {
  return (
    <svg width="41" height="40" viewBox="0 0 41 40">
      <rect x=".5" y=".5" width="40" height="39" fill="#d92b4f" stroke="#e88aa0" />
      <path d="M2 13h10l6 14L31 1h8L21 39h-8z" fill="#fff" />
    </svg>
  )
}

function AppLogo() {
  return (
    <svg width="39" height="39" viewBox="0 0 39 39">
      <path d="M3 37L15 4h7l5 29-6-3-4-6-4 1-4 10z" fill="#d4161c" />
      <path d="M15 4h7l5 29-5-2-3-22z" fill="#8e0d11" />
      <path d="M12 24h9l1 4h-11z" fill="#f03a3a" />
      <path d="M29 18h9l-4.500 5z" fill="#ddd" />
    </svg>
  )
}

function App() {
  return (
    <App_>
      <GlobalStyle />
      <svg width="0" height="0" style={{ position: "absolute" }}>
        <defs>
          <linearGradient id="grad" x1="0" y1="0" x2="0" y2="1">
            <stop offset="0" stopColor="#f4f4f4" />
            <stop offset="1" stopColor="#444" />
          </linearGradient>
          <linearGradient id="grad2" x1="0" y1="0" x2="0" y2="1">
            <stop offset="0" stopColor="#fff" />
            <stop offset="1" stopColor="#c4d2dc" />
          </linearGradient>
          <linearGradient id="grad3" x1="0" y1="0" x2="0" y2="1">
            <stop offset="0" stopColor="#d8dce2" />
            <stop offset="1" stopColor="#7d838c" />
          </linearGradient>
        </defs>
      </svg>

      <TitleBar>
        <QuickDoc />
        <TitleText>
          <span>AutoCAD 2010</span>
          <span>Drawing1.dwg</span>
        </TitleText>
        <WindowButtons>
          <WinBtn $w={28} $first>
            <svg width="14" height="8"><rect x=".5" y="1.500" width="12" height="5" rx="1" fill="#ddd" stroke="#777" /></svg>
          </WinBtn>
          <WinBtn $w={27}>
            <svg width="14" height="14" fill="none" stroke="#555"><path d="M4 3V1.500h8.500V10H11" /><rect x="1.500" y="3.500" width="9" height="9" /><rect x="4.500" y="6.500" width="3" height="3" /></svg>
          </WinBtn>
          <WinBtn $w={45}>
            <svg width="14" height="12" fill="none" stroke="#888" strokeWidth="1.600"><path d="M2 1l10 10M12 1L2 11" /></svg>
          </WinBtn>
        </WindowButtons>
      </TitleBar>

      <AppButton><AppLogo /></AppButton>

      <MenuBar>
        {menuLabels.map(([name, w]) => (
          <MenuLabel key={name} $w={w}>{name}</MenuLabel>
        ))}
        <MdiButtons>
          <svg width="11" height="12"><rect x=".5" y="7.500" width="10" height="3" fill="#eee" stroke="#444" /></svg>
          <svg width="11" height="12" fill="#666" stroke="#eee" strokeWidth="2"><rect x="1" y="2" width="9" height="9" /></svg>
          <svg width="9" height="11" stroke="#fff" strokeWidth="2.600"><path d="M1 1l7 9M8 1L1 10" /></svg>
        </MdiButtons>
      </MenuBar>

      <ToolRow>
        <Grip />
        <Toolbar $w={660}>
          {topGroups.map((group, i) => (
            <React.Fragment key={i}>
              {i > 0 && <ToolSep />}
              {group.map(name =>
                name === "dd" || name === "ddOff" ? (
                  <ToolBtn key={name} $w={12}><DropTri $dim={name === "ddOff"} /></ToolBtn>
                ) : (
                  <ToolBtn key={name}><Icon name={name} /></ToolBtn>
                )
              )}
            </React.Fragment>
          ))}
        </Toolbar>
        <Grip $left={4} />
        <Toolbar $w={589}>
          <ToolBtn $w={22}><Icon name="textStyle" /></ToolBtn>
          <Combo $w={119}><ComboArrow /></Combo>
          <ToolSep />
          <ToolBtn $w={24}><Icon name="dimStyle" /></ToolBtn>
          <Combo $w={119}><ComboArrow /></Combo>
          <ToolSep />
          <ToolBtn $w={25}><Icon name="tableStyle" /></ToolBtn>
          <Combo $w={118}><ComboArrow /></Combo>
          <ToolSep />
          <ToolBtn $w={25}><Icon name="mleaderStyle" /></ToolBtn>
          <Combo $w={118}><ComboArrow /></Combo>
        </Toolbar>
      </ToolRow>

      <ToolRow $top={3}>
        <Grip />
        <Toolbar $w={221} $pad={2}>
          <Combo $w={173}>AutoCAD Classic<ComboArrow /></Combo>
          <ToolBtn><Icon name="gear" size={17} /></ToolBtn>
          <ToolBtn><Icon name="workspace" /></ToolBtn>
        </Toolbar>
        <Grip $left={3} />
        <Toolbar $w={392}>
          <ToolBtn $w={24}><Icon name="layerProps" /></ToolBtn>
          <Combo $w={298} $gap={2} $pad={3}>
            <Icon name="bulb" size={14} />
            <Icon name="sun" size={15} />
            <Icon name="freeze" size={15} />
            <Icon name="lock" size={16} />
            <ColorSwatch />
            <span>0</span>
            <ComboArrow />
          </Combo>
          <ToolBtn><Icon name="layerCur" /></ToolBtn>
          <ToolBtn><Icon name="layerPrev" /></ToolBtn>
          <ToolBtn><Icon name="layerState" /></ToolBtn>
        </Toolbar>
        <Grip $left={3} />
        <Combo $w={148} $gap={3} $pad={5}><ColorSwatch /><span>ByLayer</span><ComboArrow /></Combo>
        <DoubleSep />
        <Combo $w={158} $gap={4} $pad={4}><LineSample $w={60} /><span>ByLayer</span><ComboArrow /></Combo>
        <DoubleSep />
        <Combo $w={124} $gap={4} $pad={4}><LineSample $w={35} /><span>ByLayer</span><ComboArrow /></Combo>
        <DoubleSep />
        <Combo $w={119} $off $pad={8}>ByColor<ComboArrow $off /></Combo>
      </ToolRow>

      <Workspace>
        <LeftDock>
          <VToolbar $open>
            <VGrip />
            {leftTools.map(name => (
              <VBtn key={name}><Icon name={name} /></VBtn>
            ))}
            <VBtn>
              <svg width="18" height="18" viewBox="0 0 18 18"><path d="M3 16L8.500 2h1.500L15 16M5 11h8" fill="none" stroke="#222" strokeWidth="2.200" /></svg>
            </VBtn>
          </VToolbar>
        </LeftDock>

        <Frame>
          <FrameTop>
            <PaletteStrip>
              <PaletteIcons>
                <Icon name="close" size={17} />
                <Icon name="autoHide" size={17} />
                <Icon name="palMenu" size={17} />
              </PaletteIcons>
              <PaletteLabel>Properties</PaletteLabel>
              <PaletteBtn><Icon name="props" size={14} /></PaletteBtn>
            </PaletteStrip>
            <Canvas>
              <Drawing />
            </Canvas>
            <VScroll>
              <ArrowUp />
              <VThumb />
              <ArrowDown $auto />
            </VScroll>
          </FrameTop>
          <TabRow>
            <NavButtons>
              <NavBtn $w={1.1}>
                <svg width="10" height="10" fill="#777"><path d="M1 0h1v10H1zM9 0v10L3 5z" /></svg>
              </NavBtn>
              <NavBtn>
                <svg width="7" height="10" fill="#777"><path d="M6 0v10L0 5z" /></svg>
              </NavBtn>
              <NavBtn>
                <svg width="7" height="10" fill="#777"><path d="M1 0v10l6-5z" /></svg>
              </NavBtn>
              <NavBtn>
                <svg width="10" height="10" fill="#777"><path d="M8 0h1v10H8zM1 0v10l6-5z" /></svg>
              </NavBtn>
            </NavButtons>
            <TabShape $w={50} $pad={11} $on $gap={1}>Model</TabShape>
            <TabShape $w={54} $pad={7}>Layout1</TabShape>
            <TabShape $w={58} $pad={7}>Layout2</TabShape>
            <TabEndArrow><ArrowRight /></TabEndArrow>
          </TabRow>
        </Frame>
        <HThumb />

        <RightDock>
          <VToolbar $w={25}>
            <VGrip />
            {rightTools.map(name => (
              <VBtn key={name}><Icon name={name} /></VBtn>
            ))}
          </VToolbar>
          <VToolbar $w={25}>
            <VGrip />
            {orderTools.map(name => (
              <VBtn key={name}><Icon name={name} /></VBtn>
            ))}
          </VToolbar>
        </RightDock>
      </Workspace>

      <CommandWindow>
        <CmdGrip><CmdGripDots /></CmdGrip>
        <CmdBody>
          <CmdOutput>
            <CmdLines>
              {"Specify second point or [Exit/Undo] <Exit>: *Cancel*\nCommand:"}
            </CmdLines>
            <CmdScroll>
              <ArrowUp />
              <ArrowDown $auto />
            </CmdScroll>
          </CmdOutput>
          <CmdInput>
            <CmdPrompt>Command:</CmdPrompt>
            <CmdHScroll>
              <CmdThumb />
              <ArrowRight />
            </CmdHScroll>
          </CmdInput>
        </CmdBody>
      </CommandWindow>

      <StatusBar>
        Forces selected objects to be displayed in front of all other objects
        <ResizeDots width="14" height="14" fill="#e8e8e8">
          <rect x="10" y="2" width="2" height="2" /><rect x="6" y="6" width="2" height="2" /><rect x="10" y="6" width="2" height="2" />
          <rect x="2" y="10" width="2" height="2" /><rect x="6" y="10" width="2" height="2" /><rect x="10" y="10" width="2" height="2" />
        </ResizeDots>
      </StatusBar>

      <PopupMenu x={714} y={138} w={311} rail={29} items={menuItems} iconWidth={20} pad={11} sepLeft={29} />
      <PopupMenu x={1019} y={470} w={184} rail={28} items={subItems} iconWidth={24} pad={7} sepLeft={30} />

      <Watermark>
        <Logo />
        <WatermarkText>Vforum.vn</WatermarkText>
      </Watermark>
    </App_>
  )
}

export default App
